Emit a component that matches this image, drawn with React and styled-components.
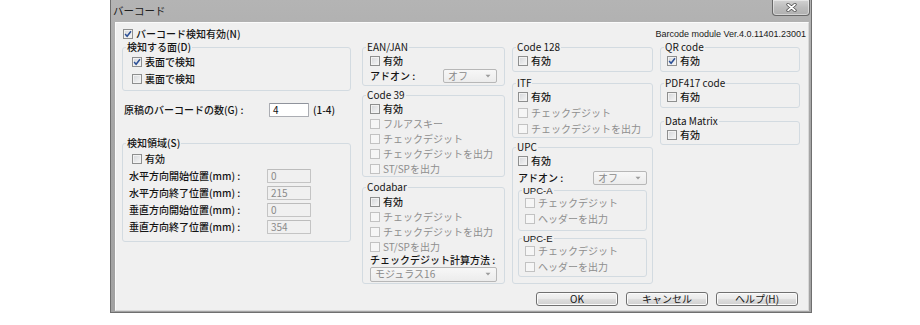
import React from 'react';
import styled, { createGlobalStyle } from 'styled-components';

const GlobalStyle = createGlobalStyle`
  html, body { margin: 0; padding: 0; background: #ffffff; }
  body {
    font-family: "Noto Sans CJK JP", "Liberation Sans", sans-serif;
    font-size: 10px;
    font-weight: 500;
    color: #141414;
  }
`;

const Page = styled.div`
  width: 920px;
  height: 325px;
  padding-left: 110px;
  box-sizing: border-box;
`;

const Window = styled.div`
  width: 702px;
  height: 313px;
  box-sizing: border-box;
  border: 1px solid #6f6f6f;
  border-top: none;
  background: linear-gradient(#b4b4b4, #a6a6a6 40%, #a2a2a2);
  display: flex;
  flex-direction: column;
`;

const TitleBar = styled.div`
  height: 22px;
  flex: none;
  display: flex;
  justify-content: space-between;
  align-items: flex-start;
  padding: 0 1px 0 2px;
`;

const Title = styled.span`
  line-height: 22px;
  font-size: 10.5px;
  font-weight: 400;
  color: #202020;
`;

const CloseButton = styled.div`
  width: 38px;
  height: 16px;
  box-sizing: border-box;
  border: 1px solid #686868;
  border-top: none;
  border-radius: 0 0 4px 4px;
  background: linear-gradient(#d2d2d2, #bcbcbc 50%, #b0b0b0);
  box-shadow: inset 0 0 0 1px rgba(255, 255, 255, 0.45);
  display: flex;
  align-items: center;
  justify-content: center;
`;

const Frame = styled.div`
  flex: 1;
  display: flex;
  padding: 0 2px 1px 4px;
`;

const Client = styled.div`
  flex: 1;
  background: #f0f0f0;
  border: 1px solid #fbfbfb;
  border-right-color: #d8d8d8;
  border-bottom-color: #d8d8d8;
  padding: 4px 2px 0 6px;
  display: flex;
  flex-direction: column;
`;

const HeaderRow = styled.div`
  height: 13px;
  margin-bottom: 1px;
  display: flex;
  align-items: center;
  justify-content: space-between;
  padding-left: 1px;
`;

const Version = styled.span`
  font-family: "Liberation Sans", "Noto Sans CJK JP", sans-serif;
  font-size: 9px;
  font-weight: 400;
  line-height: 10px;
  color: #1a1a1a;
`;

const Columns = styled.div`
  display: flex;
  align-items: flex-start;
  gap: 11px;
  padding-right: 6px;
`;

const Column = styled.div`
  width: ${(p) => p.$w}px;
  flex: none;
  margin-left: ${(p) => p.$ml || 0}px;
  display: flex;
  flex-direction: column;
`;

const Group = styled.div`
  margin-top: ${(p) => p.$mt}px;
  border: 1px solid #d3dbe1;
  border-radius: 3px;
  display: flex;
  flex-direction: column;
`;

const Legend = styled.span`
  align-self: flex-start;
  margin: -7px 0 ${(p) => p.$after || 0}px 3px;
  padding: 0 1px;
  line-height: 12px;
  font-weight: ${(p) => (p.$latin ? 400 : 500)};
  background: #f0f0f0;
  color: #141414;
`;

const SubLegend = styled.span`
  align-self: flex-start;
  margin: -5px 0 -1px 3px;
  padding: 0 1px;
  font-family: "Liberation Sans", "Noto Sans CJK JP", sans-serif;
  font-size: 9.5px;
  font-weight: 400;
  line-height: 10px;
  background: #f0f0f0;
  color: #141414;
`;

const GroupBody = styled.div`
  display: flex;
  flex-direction: column;
  padding: 0 ${(p) => p.$px}px ${(p) => p.$pb || 0}px;
`;

const CheckRow = styled.div`
  height: ${(p) => p.$h}px;
  display: flex;
  align-items: center;
  gap: 3px;
  padding-left: ${(p) => p.$indent || 0}px;
  color: ${(p) => (p.$disabled ? '#8e8e8e' : '#141414')};
  font-weight: ${(p) => (p.$disabled ? 400 : 500)};
  white-space: nowrap;
`;

const Box = styled.span`
  width: 10px;
  height: 10px;
  flex: none;
  box-sizing: border-box;
  border: 1px solid ${(p) => (p.$disabled ? '#c2c2c2' : '#8e8f8f')};
  background: ${(p) =>
    p.$disabled ? '#f6f6f6' : 'linear-gradient(135deg, #d4d6d9, #f7f7f7)'};
  box-shadow: inset 0 0 0 1px ${(p) => (p.$disabled ? '#f6f6f6' : '#f2f2f2')};
  display: flex;
  align-items: center;
  justify-content: center;
`;

const Label = styled.span`
  line-height: 10px;
`;

const FieldRow = styled.div`
  height: ${(p) => p.$h}px;
  display: flex;
  align-items: center;
  justify-content: ${(p) => (p.$between ? 'space-between' : 'flex-start')};
  white-space: nowrap;
`;

const SelectBox = styled.div`
  width: ${(p) => p.$w}px;
  height: ${(p) => p.$hgt || 14}px;
  box-sizing: border-box;
  border: 1px solid #b7b7b7;
  border-radius: 2px;
  background: linear-gradient(#f7f7f7, #ececec);
  color: #8a8a8a;
  font-weight: 400;
  display: flex;
  align-items: center;
  justify-content: space-between;
  padding: 0 5px 0 4px;
  line-height: 10px;
`;

const TextInput = styled.div`
  width: ${(p) => p.$w}px;
  height: 14px;
  box-sizing: border-box;
  border: 1px solid ${(p) => (p.$disabled ? '#c4c4c4' : '#abadb3')};
  border-top-color: ${(p) => (p.$disabled ? '#bcbcbc' : '#8f939c')};
  border-radius: 1px;
  background: ${(p) => (p.$disabled ? '#f0f0f0' : '#ffffff')};
  color: ${(p) => (p.$disabled ? '#8a8a8a' : '#111111')};
  font-weight: 400;
  padding-left: 3px;
  line-height: 10px;
  display: flex;
  align-items: center;
`;

const CountRow = styled.div`
  height: 15px;
  margin-top: 11px;
  padding-left: 2px;
  display: flex;
  align-items: center;
  gap: 4px;
`;

const CountLabel = styled.span`
  width: 141px;
  line-height: 10px;
`;

const AreaGrid = styled.div`
  display: grid;
  grid-template-columns: 138px 44px;
  grid-auto-rows: 17px;
  align-items: center;
`;

const ButtonRow = styled.div`
  margin-top: 8px;
  display: flex;
  justify-content: flex-end;
  gap: 8px;
  padding-right: 8px;
`;

const Button = styled.div`
  width: 82px;
  height: 14px;
  box-sizing: border-box;
  border: 1px solid #707070;
  border-radius: 3px;
  background: linear-gradient(#f3f3f3, #ebebeb 45%, #dddddd 55%, #cfcfcf);
  box-shadow: inset 0 0 0 1px #fbfbfb;
  display: flex;
  align-items: center;
  justify-content: center;
  line-height: 10px;
  font-weight: 400;
  color: #141414;
`;

function CheckMark() {
  return (
    <svg width="8" height="8" viewBox="0 0 8 8">
      <path d="M1.1 4.1 L3.1 6.3 L7 1.2" fill="none" stroke="#2b4f96" strokeWidth="1.5" />
    </svg>
  );
}

function Check({ label, checked, disabled, h = 16, indent = 0 }) {
  return (
    <CheckRow $h={h} $indent={indent} $disabled={disabled}>
      <Box $disabled={disabled}>{checked && <CheckMark />}</Box>
      <Label>{label}</Label>
    </CheckRow>
  );
}

function Arrow() {
  return (
    <svg width="6" height="4" viewBox="0 0 6 4">
      <path d="M0.5 0.8 L5.5 0.8 L3 3.5 Z" fill="#9c9c9c" />
    </svg>
  );
}

function Select({ w, value, hgt }) {
  return (
    <SelectBox $w={w} $hgt={hgt}>
      <span>{value}</span>
      <Arrow />
    </SelectBox>
  );
}

function CloseGlyph() {
  return (
    <svg width="11" height="9" viewBox="0 0 11 9">
      <path d="M2 1.5 L9 7.5 M9 1.5 L2 7.5" stroke="#4a4a4a" strokeWidth="3.2" strokeLinecap="round" />
      <path d="M2 1.5 L9 7.5 M9 1.5 L2 7.5" stroke="#ffffff" strokeWidth="1.7" strokeLinecap="round" />
    </svg>
  );
}

const areaRows = [
  ['水平方向開始位置(mm) :', '0'],
  ['水平方向終了位置(mm) :', '215'],
  ['垂直方向開始位置(mm) :', '0'],
  ['垂直方向終了位置(mm) :', '354'],
];

export default function App() {
  return (
    <Page>
      <GlobalStyle />
      <Window>
        <TitleBar>
          <Title>バーコード</Title>
          <CloseButton>
            <CloseGlyph />
          </CloseButton>
        </TitleBar>
        <Frame>
          <Client>
            <HeaderRow>
              <Check checked label="バーコード検知有効(N)" h={13} />
              <Version>Barcode module Ver.4.0.11401.23001</Version>
            </HeaderRow>

            <Columns>
              <Column $w={229}>
                <Group $mt={6}>
                  <Legend>検知する面(D)</Legend>
                  <GroupBody $px={9} $pb={3}>
                    <Check checked label="表面で検知" h={17} />
                    <Check label="裏面で検知" h={17} />
                  </GroupBody>
                </Group>
                <CountRow>
                  <CountLabel>原稿のバーコードの数(G) :</CountLabel>
                  <TextInput $w={40}>4</TextInput>
                  <Label>(1-4)</Label>
                </CountRow>
                <Group $mt={26}>
                  <Legend $after={2}>検知領域(S)</Legend>
                  <GroupBody $px={6} $pb={6}>
                    <Check label="有効" h={16} indent={3} />
                    <AreaGrid>
                      {areaRows.map(([label, value]) => (
                        <React.Fragment key={label}>
                          <Label>{label}</Label>
                          <TextInput $w={44} $disabled>
                            {value}
                          </TextInput>
                        </React.Fragment>
                      ))}
                    </AreaGrid>
                  </GroupBody>
                </Group>
              </Column>

              <Column $w={143}>
                <Group $mt={6}>
                  <Legend $latin>EAN/JAN</Legend>
                  <GroupBody $px={7} $pb={1}>
                    <Check label="有効" h={15} />
                    <FieldRow $h={16} $between>
                      <Label>アドオン :</Label>
                      <Select w={54} value="オフ" />
                    </FieldRow>
                  </GroupBody>
                </Group>
                <Group $mt={9}>
                  <Legend $latin>Code 39</Legend>
                  <GroupBody $px={7}>
                    <Check label="有効" h={15} />
                    <Check disabled label="フルアスキー" h={15} />
                    <Check disabled label="チェックデジット" h={15} />
                    <Check disabled label="チェックデジットを出力" h={15} />
                    <Check disabled label="ST/SPを出力" h={15} />
                  </GroupBody>
                </Group>
                <Group $mt={10}>
                  <Legend $latin $after={1}>Codabar</Legend>
                  <GroupBody $px={7} $pb={1}>
                    <Check label="有効" h={15} />
                    <Check disabled label="チェックデジット" h={15} />
                    <Check disabled label="チェックデジットを出力" h={15} />
                    <Check disabled label="ST/SPを出力" h={15} />
                    <FieldRow $h={12}>
                      <Label>チェックデジット計算方法 :</Label>
                    </FieldRow>
                    <FieldRow $h={16}>
                      <Select w={127} hgt={15} value="モジュラス16" />
                    </FieldRow>
                  </GroupBody>
                </Group>
              </Column>

              <Column $w={141} $ml={-4}>
                <Group $mt={6}>
                  <Legend $latin>Code 128</Legend>
                  <GroupBody $px={5} $pb={2}>
                    <Check label="有効" h={16} />
                  </GroupBody>
                </Group>
                <Group $mt={11}>
                  <Legend $latin>ITF</Legend>
                  <GroupBody $px={5}>
                    <Check label="有効" h={16} />
                    <Check disabled label="チェックデジット" h={16} />
                    <Check disabled label="チェックデジットを出力" h={16} />
                  </GroupBody>
                </Group>
                <Group $mt={9}>
                  <Legend $latin>UPC</Legend>
                  <GroupBody $px={5} $pb={6}>
                    <Check label="有効" h={16} />
                    <FieldRow $h={17} $between>
                      <Label>アドオン :</Label>
                      <Select w={54} value="オフ" />
                    </FieldRow>
                    <Group $mt={4}>
                      <SubLegend>UPC-A</SubLegend>
                      <GroupBody $px={6} $pb={3}>
                        <Check disabled label="チェックデジット" h={16} />
                        <Check disabled label="ヘッダーを出力" h={16} />
                      </GroupBody>
                    </Group>
                    <Group $mt={7}>
                      <SubLegend>UPC-E</SubLegend>
                      <GroupBody $px={6} $pb={1}>
                        <Check disabled label="チェックデジット" h={16} />
                        <Check disabled label="ヘッダーを出力" h={16} />
                      </GroupBody>
                    </Group>
                  </GroupBody>
                </Group>
              </Column>

              <Column $w={140} $ml={-4}>
                <Group $mt={6}>
                  <Legend $latin>QR code</Legend>
                  <GroupBody $px={6} $pb={2}>
                    <Check checked label="有効" h={16} />
                  </GroupBody>
                </Group>
                <Group $mt={11}>
                  <Legend $latin>PDF417 code</Legend>
                  <GroupBody $px={6} $pb={2}>
                    <Check label="有効" h={16} />
                  </GroupBody>
                </Group>
                <Group $mt={13}>
                  <Legend $latin>Data Matrix</Legend>
                  <GroupBody $px={6} $pb={1}>
                    <Check label="有効" h={16} />
                  </GroupBody>
                </Group>
              </Column>
            </Columns>

            <ButtonRow>
              <Button>OK</Button>
              <Button>キャンセル</Button>
              <Button>ヘルプ(H)</Button>
            </ButtonRow>
          </Client>
        </Frame>
      </Window>
    </Page>
  );
}
